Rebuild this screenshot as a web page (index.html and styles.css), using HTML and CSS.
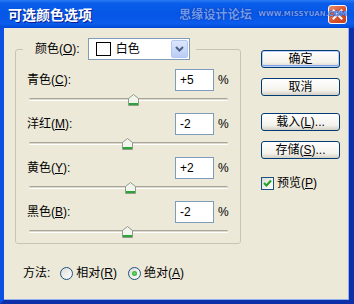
FILE: index.html
```html
<!DOCTYPE html>
<html lang="zh-CN">
<head>
    <meta charset="UTF-8">
    <meta name="viewport" content="width=device-width, initial-scale=1.0">
    <title>可选颜色选项</title>
    <link rel="stylesheet" href="styles.css">
</head>
<body>
    <div class="window">
        <div class="titlebar">
            <span class="title">可选颜色选项</span>
            <span class="close">
                <svg width="11" height="11" viewBox="0 0 11 11"><path d="M1.5 1.5 L9.5 9.5 M9.5 1.5 L1.5 9.5" stroke="#fff" stroke-width="2" stroke-linecap="square"/></svg>
            </span>
            <div class="watermark"><span class="wm-cn">思缘设计论坛</span><span class="wm-en">WWW.MISSYUAN.COM</span></div>
        </div>
        <div class="frame">
            <div class="left">
                <fieldset class="group">
                    <legend>
                        <span class="label">颜色(<u>O</u>):</span>
                        <div class="select">
                            <span class="swatch"></span>
                            <span class="select-text">白色</span>
                            <span class="select-btn">
                                <svg width="9" height="6" viewBox="0 0 9 6"><path d="M1 1 L4.5 4.5 L8 1" fill="none" stroke="#4D6185" stroke-width="2"/></svg>
                            </span>
                        </div>
                    </legend>
                    <div class="row">
                        <div class="row-head"><span class="label">青色(<u>C</u>):</span><span class="field">+5</span><span class="pct">%</span></div>
                        <div class="slider"><div class="track"></div><span class="thumb" style="left: calc(52.5% - 5px)"><svg width="11" height="12" viewBox="0 0 11 12"><path d="M0.5 4.5 L5.5 0.5 L10.5 4.5 L10.5 11.5 L0.5 11.5 Z" fill="#F2F5EE" stroke="#8E9C8A"/><rect x="1" y="9" width="9" height="2" fill="#2FA23A"/></svg></span></div>
                    </div>
                    <div class="row">
                        <div class="row-head"><span class="label">洋红(<u>M</u>):</span><span class="field">-2</span><span class="pct">%</span></div>
                        <div class="slider"><div class="track"></div><span class="thumb" style="left: calc(49% - 5px)"><svg width="11" height="12" viewBox="0 0 11 12"><path d="M0.5 4.5 L5.5 0.5 L10.5 4.5 L10.5 11.5 L0.5 11.5 Z" fill="#F2F5EE" stroke="#8E9C8A"/><rect x="1" y="9" width="9" height="2" fill="#2FA23A"/></svg></span></div>
                    </div>
                    <div class="row">
                        <div class="row-head"><span class="label">黄色(<u>Y</u>):</span><span class="field">+2</span><span class="pct">%</span></div>
                        <div class="slider"><div class="track"></div><span class="thumb" style="left: calc(51% - 5px)"><svg width="11" height="12" viewBox="0 0 11 12"><path d="M0.5 4.5 L5.5 0.5 L10.5 4.5 L10.5 11.5 L0.5 11.5 Z" fill="#F2F5EE" stroke="#8E9C8A"/><rect x="1" y="9" width="9" height="2" fill="#2FA23A"/></svg></span></div>
                    </div>
                    <div class="row">
                        <div class="row-head"><span class="label">黑色(<u>B</u>):</span><span class="field">-2</span><span class="pct">%</span></div>
                        <div class="slider"><div class="track"></div><span class="thumb" style="left: calc(49% - 5px)"><svg width="11" height="12" viewBox="0 0 11 12"><path d="M0.5 4.5 L5.5 0.5 L10.5 4.5 L10.5 11.5 L0.5 11.5 Z" fill="#F2F5EE" stroke="#8E9C8A"/><rect x="1" y="9" width="9" height="2" fill="#2FA23A"/></svg></span></div>
                    </div>
                </fieldset>
                <div class="method">
                    <span>方法:</span>
                    <span class="radio"></span><span class="opt">相对(<u>R</u>)</span>
                    <span class="radio checked"></span><span class="opt">绝对(<u>A</u>)</span>
                </div>
            </div>
            <div class="right">
                <button class="btn default">确定</button>
                <button class="btn">取消</button>
                <button class="btn sep">载入(<u>L</u>)...</button>
                <button class="btn">存储(<u>S</u>)...</button>
                <div class="check-row">
                    <span class="checkbox"><svg width="9" height="9" viewBox="0 0 9 9"><path d="M1 4 L3.5 6.5 L8 1.5" fill="none" stroke="#21A121" stroke-width="2"/></svg></span>
                    <span>预览(<u>P</u>)</span>
                </div>
            </div>
        </div>
    </div>
</body>
</html>
```

FILE: styles.css
```css
body {
    margin: 0;
    background-color: #ECE9D8;
    font-family: "Liberation Sans", "Noto Sans CJK SC", sans-serif;
    font-size: 12px;
    line-height: 14px;
    color: #000;
}
u { text-decoration: underline; text-underline-offset: 1px; }
.window {
    width: 354px;
    height: 304px;
    display: flex;
    flex-direction: column;
}
.titlebar {
    position: relative;
    height: 28px;
    flex: none;
    display: flex;
    align-items: center;
    padding: 0 7px 0 8px;
    background: linear-gradient(#2A7AF4 0, #0A5DEA 12%, #0556E6 50%, #0B5CEC 85%, #0047D4 100%);
}
.title {
    flex: 1;
    color: #fff;
    font-family: "Noto Sans CJK SC", sans-serif;
    font-weight: bold;
    font-size: 14px;
    text-shadow: 1px 1px 0 #0A1E8C;
}
.close {
    width: 19px;
    height: 19px;
    box-sizing: border-box;
    display: flex;
    align-items: center;
    justify-content: center;
    border: 1px solid #fff;
    border-radius: 3px;
    background: linear-gradient(135deg, #E98A6C, #D8502C 60%, #C1401E);
}
/* watermark stamped over the title bar */
.watermark {
    position: absolute;
    z-index: 1;
    left: 179px;
    top: 7px;
    display: flex;
    align-items: center;
    color: rgba(125, 170, 250, 0.9);
    text-shadow: 0 0 1px #0B2F9E, 0 0 1px #0B2F9E;
}
.wm-cn {
    font-family: "Noto Sans CJK SC", sans-serif;
    font-size: 12px;
    font-weight: bold;
    letter-spacing: 0.2px;
}
.wm-en {
    margin-left: 6px;
    font-family: "DejaVu Sans", sans-serif;
    font-size: 7px;
    font-weight: bold;
    letter-spacing: 0.1px;
}
.frame {
    flex: 1;
    display: flex;
    border-style: solid;
    border-width: 0 5px 4px 4px;
    border-color: #0A50E2 #0D2FA8 #0D2FA8 #0A50E2;
    box-shadow: inset -1px -1px 0 #8FB0EE;
}
.left {
    margin-left: 11px;
    width: 226px;
}
.group {
    margin: 10px 0 0;
    padding: 0;
    min-width: 0;
    border: 1px solid #C7C5B2;
    border-radius: 3px;
}
.group legend {
    margin-left: 7px;
    padding: 0 6px 0 12px;
    display: flex;
    align-items: center;
    gap: 8px;
}
.select {
    width: 102px;
    height: 22px;
    box-sizing: border-box;
    display: flex;
    align-items: center;
    padding-left: 7px;
    border: 1px solid #7F9DB9;
    background-color: #fff;
}
.swatch {
    width: 15px;
    height: 14px;
    box-sizing: border-box;
    border: 1px solid #000;
}
.select-text { margin-left: 5px; }
.select-btn {
    margin-left: auto;
    margin-right: 1px;
    width: 17px;
    height: 18px;
    box-sizing: border-box;
    display: flex;
    align-items: center;
    justify-content: center;
    border: 1px solid #B4C7F2;
    border-radius: 2px;
    background: linear-gradient(#DDE7FD, #BACDF7);
}
.row {
    margin-left: 11px;
    width: 202px;
}
.group legend + .row { margin-top: 9px; }
.row + .row { margin-top: 2px; }
.row-head {
    height: 22px;
    display: flex;
    align-items: center;
}
.row-head .label { flex: 1; }
.field {
    width: 39px;
    height: 22px;
    box-sizing: border-box;
    padding: 0 4px;
    line-height: 20px;
    border: 1px solid #7F9DB9;
    background-color: #fff;
}
.pct {
    width: 11px;
    margin-left: 4px;
}
.slider {
    position: relative;
    height: 20px;
    width: 199px;
    margin-left: 2px;
}
.track {
    position: relative;
    top: 7px;
    height: 1px;
    border-top: 1px solid #A6A597;
    border-bottom: 1px solid #fff;
    border-radius: 2px;
    background-color: #DCDAD0;
}
.thumb {
    position: absolute;
    top: 3px;
    width: 11px;
    height: 12px;
}
.thumb svg { display: block; }
.method {
    margin-top: 22px;
    padding-left: 8px;
    height: 14px;
    display: flex;
    align-items: center;
}
.radio {
    width: 13px;
    height: 13px;
    box-sizing: border-box;
    margin: 0 3px 0 10px;
    border: 1px solid #1C5180;
    border-radius: 50%;
    background: linear-gradient(135deg, #DCDCD6, #fff);
    display: flex;
    align-items: center;
    justify-content: center;
}
.radio.checked::after {
    content: "";
    width: 5px;
    height: 5px;
    border-radius: 50%;
    background: radial-gradient(#6CD86C, #21A121);
}
.opt + .radio { margin-left: 11px; }
.right {
    margin-left: 20px;
    width: 79px;
    padding-top: 22px;
    display: flex;
    flex-direction: column;
}
.btn {
    height: 18px;
    padding: 0;
    font: inherit;
    line-height: 14px;
    color: #000;
    border: 1px solid #003C74;
    border-radius: 3px;
    background: linear-gradient(#FFFFFF, #F3F2EC 70%, #D6D0C5);
}
.btn.default { box-shadow: inset 0 0 0 1px #B9CFF5, inset 0 -1px 0 1px #7FA4EA; }
.btn + .btn { margin-top: 10px; }
.btn.sep { margin-top: 17px; }
.check-row {
    margin-top: 17px;
    display: flex;
    align-items: center;
    gap: 3px;
}
.checkbox {
    width: 13px;
    height: 13px;
    box-sizing: border-box;
    display: flex;
    align-items: center;
    justify-content: center;
    border: 1px solid #1C5180;
    background: linear-gradient(135deg, #DCDCD6, #fff);
}
```
